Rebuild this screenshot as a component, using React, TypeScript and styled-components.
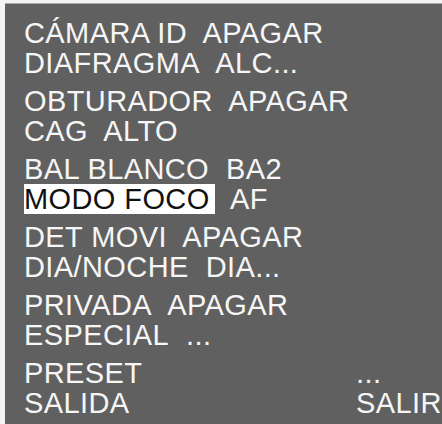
import React from "react";
import styled, { createGlobalStyle } from "styled-components";

const Global = createGlobalStyle`
  html, body { margin: 0; padding: 0; background: #f3f3f3; }
  body { width: 442px; height: 424px; overflow: hidden; }
`;

const Screen = styled.div`
  margin: 3px 0 0 5px;
  height: 421px;
  background: #606060;
  border-top: 1px solid #a8a8a8;
  box-sizing: border-box;
  padding: 14px 0 0 19px;
  display: flex;
  flex-direction: column;
  gap: 8px;
  font-family: "Liberation Sans", Arial, sans-serif;
  font-size: 29px;
  line-height: 30px;
  letter-spacing: 0.4px;
  color: #f6f6f6;
  white-space: pre;
`;

const Group = styled.div`
  display: flex;
  flex-direction: column;
`;

const Row = styled.div`
  display: grid;
  grid-template-columns: ${(p: { $cols?: boolean }) => (p.$cols ? "332px auto" : "auto auto")};
  justify-content: start;
  height: 30px;
`;

const Label = styled.span<{ $selected?: boolean }>`
  display: inline-block;
  height: 30px;
  ${(p) =>
    p.$selected
      ? `background: #ffffff; color: #111111; padding-right: 5px;`
      : ``}
`;

const Value = styled.span`
  display: inline-block;
`;

type Item = { label: string; value: string; selected?: boolean; col?: boolean };

const groups: Item[][] = [
  [
    { label: "CÁMARA ID", value: "  APAGAR" },
    { label: "DIAFRAGMA", value: "  ALC..." },
  ],
  [
    { label: "OBTURADOR", value: "  APAGAR" },
    { label: "CAG", value: "  ALTO" },
  ],
  [
    { label: "BAL BLANCO", value: "  BA2" },
    { label: "MODO FOCO", value: "  AF", selected: true },
  ],
  [
    { label: "DET MOVI", value: "  APAGAR" },
    { label: "DIA/NOCHE", value: "  DIA..." },
  ],
  [
    { label: "PRIVADA", value: "  APAGAR" },
    { label: "ESPECIAL", value: "  ..." },
  ],
  [
    { label: "PRESET", value: "...", col: true },
    { label: "SALIDA", value: "SALIR", col: true },
  ],
];

export default function App() {
  return (
    <>
      <Global />
      <Screen>
        {groups.map((g, i) => (
          <Group key={i}>
            {g.map((it) => (
              <Row key={it.label} $cols={it.col}>
                <Label $selected={it.selected}>{it.label}</Label>
                <Value>{it.value}</Value>
              </Row>
            ))}
          </Group>
        ))}
      </Screen>
    </>
  );
}
